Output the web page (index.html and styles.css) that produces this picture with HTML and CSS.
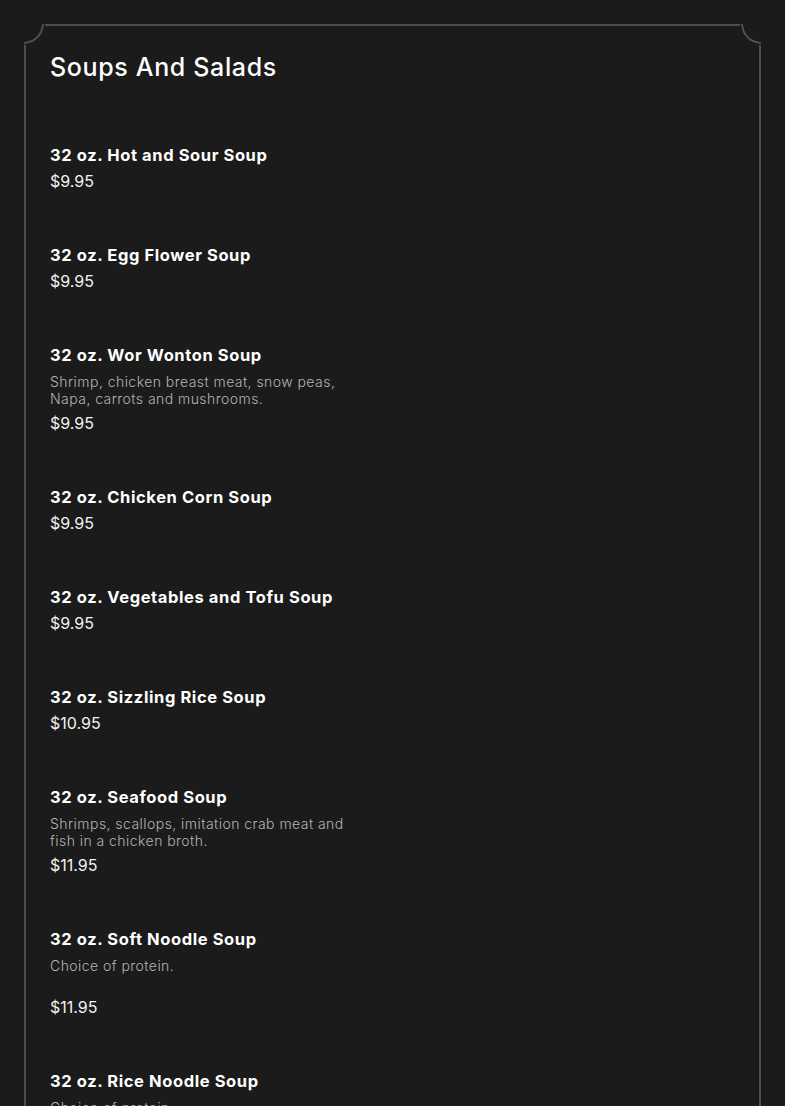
FILE: index.html
```html
<!DOCTYPE html>
<html lang="en">
<head>
<meta charset="utf-8">
<title>Soups And Salads</title>
<link rel="stylesheet" href="styles.css">
</head>
<body>
<main class="page">
  <section class="card">
    <span class="corner corner-tl"></span>
    <span class="corner corner-tr"></span>
    <h2 class="section-title">Soups And Salads</h2>
    <ul class="items">
      <li class="item">
        <h3 class="item-name">32 oz. Hot and Sour Soup</h3>
        <p class="item-price">$9.95</p>
      </li>
      <li class="item">
        <h3 class="item-name">32 oz. Egg Flower Soup</h3>
        <p class="item-price">$9.95</p>
      </li>
      <li class="item">
        <h3 class="item-name">32 oz. Wor Wonton Soup</h3>
        <p class="item-desc">Shrimp, chicken breast meat, snow peas,<br>Napa, carrots and mushrooms.</p>
        <p class="item-price">$9.95</p>
      </li>
      <li class="item">
        <h3 class="item-name">32 oz. Chicken Corn Soup</h3>
        <p class="item-price">$9.95</p>
      </li>
      <li class="item">
        <h3 class="item-name">32 oz. Vegetables and Tofu Soup</h3>
        <p class="item-price">$9.95</p>
      </li>
      <li class="item">
        <h3 class="item-name">32 oz. Sizzling Rice Soup</h3>
        <p class="item-price">$10.95</p>
      </li>
      <li class="item">
        <h3 class="item-name">32 oz. Seafood Soup</h3>
        <p class="item-desc">Shrimps, scallops, imitation crab meat and<br>fish in a chicken broth.</p>
        <p class="item-price">$11.95</p>
      </li>
      <li class="item">
        <h3 class="item-name">32 oz. Soft Noodle Soup</h3>
        <p class="item-desc">Choice of protein.<br><br></p>
        <p class="item-price">$11.95</p>
      </li>
      <li class="item">
        <h3 class="item-name">32 oz. Rice Noodle Soup</h3>
        <p class="item-desc">Choice of protein.<br><br></p>
        <p class="item-price">$11.95</p>
      </li>
    </ul>
  </section>
</main>
</body>
</html>
```
FILE: styles.css
```css
html, body {
  margin: 0;
  padding: 0;
  background: #1b1b1b;
}

body {
  font-family: Inter, "Open Sans", "Liberation Sans", sans-serif;
  color: #ffffff;
}

.page {
  padding: 24px 24px 0 24px;
}

.card {
  position: relative;
  border: 2px solid #4e4e4e;
  border-bottom: none;
  padding: 25px 24px 40px 24px;
  min-height: 1200px;
}

.corner {
  position: absolute;
  top: -2px;
  width: 21px;
  height: 21px;
}

.corner-tl {
  left: -2px;
  background: radial-gradient(circle at 0 0, #1b1b1b 0 17.5px, #4e4e4e 18px 19.5px, #1b1b1b 20px);
}

.corner-tr {
  right: -2px;
  background: radial-gradient(circle at 100% 0, #1b1b1b 0 17.5px, #4e4e4e 18px 19.5px, #1b1b1b 20px);
}

.section-title {
  margin: 0;
  font-size: 25px;
  line-height: 32px;
  font-weight: 500;
  letter-spacing: 0.65px;
}

.items {
  list-style: none;
  margin: 60px 0 0 0;
  padding: 0;
  display: flex;
  flex-direction: column;
  gap: 50px;
}

.item {
  display: flex;
  flex-direction: column;
}

.item-name {
  margin: 0 0 2px 0;
  font-size: 16.5px;
  line-height: 24px;
  font-weight: 700;
  letter-spacing: 0.6px;
}

.item-desc {
  margin: 4px 0 4px 0;
  font-size: 14px;
  line-height: 17px;
  font-weight: 300;
  letter-spacing: 0.45px;
  color: #b4b4b4;
}

.item-price {
  margin: 0;
  font-size: 16px;
  line-height: 24px;
  font-weight: 400;
  color: #f2f2f2;
}
```
